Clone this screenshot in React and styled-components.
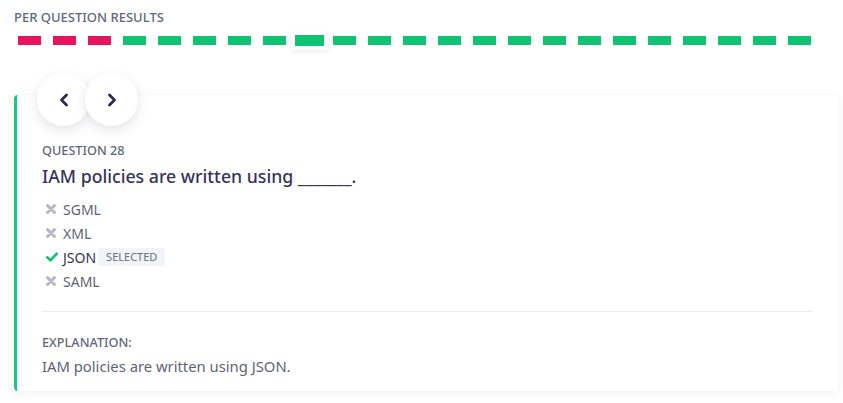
import React from "react";
import styled, { createGlobalStyle } from "styled-components";

const results = [
	false, false, false, true, true, true, true, true, true, true, true, true,
	true, true, true, true, true, true, true, true, true, true, true,
];
const current = 8;

const options = [
	{ label: "SGML", correct: false },
	{ label: "XML", correct: false },
	{ label: "JSON", correct: true, selected: true },
	{ label: "SAML", correct: false },
];

const GlobalStyle = createGlobalStyle`
	body {
		margin: 0;
		background: #ffffff;
		font-family: "Noto Sans", "Open Sans", sans-serif;
	}
`;

const CrossIcon = () => (
	<svg width="10" height="10" viewBox="0 0 10 10">
		<path d="M1.6 1.6 L8.4 8.4 M8.4 1.6 L1.6 8.4" stroke="#b4b9c4" strokeWidth="3" strokeLinecap="round" />
	</svg>
);

const CheckIcon = () => (
	<svg width="12" height="10" viewBox="0 0 12 10">
		<path d="M1.3 5.3 L4.4 8.3 L10.8 1.6" stroke="#12c274" strokeWidth="2.6" fill="none" strokeLinecap="round" strokeLinejoin="round" />
	</svg>
);

const Chevron = ({ dir }) => (
	<svg width="12" height="14" viewBox="0 0 12 14">
		<path
			d={dir === "left" ? "M8.5 2 L3.5 7 L8.5 12" : "M3.5 2 L8.5 7 L3.5 12"}
			stroke="#2b2b52"
			strokeWidth="2.8"
			fill="none"
			strokeLinecap="round"
			strokeLinejoin="round"
		/>
	</svg>
);

const App = () => {
	return (
		<Page>
			<GlobalStyle />
			<Heading>Per question results</Heading>
			<Dashes>
				{results.map((ok, i) => (
					<Dash key={i} $ok={ok} $active={i === current} />
				))}
			</Dashes>
			<CardWrap>
				<NavButtons>
					<NavButton>
						<Chevron dir="left" />
					</NavButton>
					<NavButton $front>
						<Chevron dir="right" />
					</NavButton>
				</NavButtons>
				<Card>
					<Label>Question 28</Label>
					<Question>IAM policies are written using _______.</Question>
					<Options>
						{options.map((o) => (
							<Option key={o.label}>
								<IconBox>{o.correct ? <CheckIcon /> : <CrossIcon />}</IconBox>
								<OptionText $correct={o.correct}>{o.label}</OptionText>
								{o.selected && <Badge>Selected</Badge>}
							</Option>
						))}
					</Options>
					<Divider />
					<Label>Explanation:</Label>
					<Explanation>IAM policies are written using JSON.</Explanation>
				</Card>
			</CardWrap>
		</Page>
	);
};

export default App;

const Page = styled.div`
	padding: 9px 5px 12px 14px;
`;
const Heading = styled.div`
	font-size: 13px;
	line-height: 16px;
	font-weight: 500;
	text-transform: uppercase;
	color: #62677a;
`;
const Dashes = styled.div`
	display: flex;
	gap: 12px;
	padding: 11px 0 0 4px;
	height: 9px;
`;
const Dash = styled.div`
	width: 23px;
	height: 9px;
	flex: none;
	background: ${({ $ok }) => ($ok ? "#0fc372" : "#e9125c")};
	transform: ${({ $active }) => ($active ? "scale(1.26, 1.22)" : "none")};
	box-shadow: ${({ $active }) =>
		$active ? "0 0 0 3px #ffffff, 0 2px 5px 3px rgba(40, 50, 80, 0.09)" : "none"};
`;
const CardWrap = styled.div`
	position: relative;
	margin-top: 50px;
`;
const NavButtons = styled.div`
	position: absolute;
	top: -22px;
	left: 23px;
	display: flex;
	z-index: 2;
`;
const NavButton = styled.div`
	width: 53px;
	height: 53px;
	border-radius: 50%;
	background: #ffffff;
	display: flex;
	align-items: center;
	justify-content: center;
	box-shadow: 0 4px 12px rgba(40, 45, 80, 0.13);
	margin-left: ${({ $front }) => ($front ? "-5px" : "0")};
	position: relative;
	z-index: ${({ $front }) => ($front ? 2 : 1)};
`;
const Card = styled.div`
	background: #ffffff;
	border-left: 3px solid #1dc47c;
	border-radius: 4px;
	box-shadow: 0 2px 10px rgba(40, 45, 80, 0.07);
	padding: 47px 25px 15px 25px;
`;
const Label = styled.div`
	font-size: 12.7px;
	line-height: 16px;
	font-weight: 500;
	text-transform: uppercase;
	color: #62677a;
`;
const Question = styled.div`
	margin-top: 6px;
	font-size: 17.7px;
	line-height: 24px;
	font-weight: 500;
	color: #33345a;
`;
const Options = styled.div`
	margin-top: 9px;
	display: flex;
	flex-direction: column;
	padding-bottom: 18px;
`;
const Option = styled.div`
	display: flex;
	align-items: center;
	height: 24px;
`;
const IconBox = styled.div`
	width: 21px;
	display: flex;
	align-items: center;
	padding-left: 4px;
	box-sizing: border-box;
`;
const OptionText = styled.span`
	font-size: 14px;
	color: ${({ $correct }) => ($correct ? "#33345a" : "#5f6475")};
`;
const Badge = styled.span`
	margin-left: 2px;
	padding: 2px 8px;
	background: #f1f4f8;
	border-radius: 3px;
	font-size: 11px;
	line-height: 14px;
	text-transform: uppercase;
	color: #6a6f80;
`;
const Divider = styled.div`
	height: 1px;
	background: #e9ebef;
	margin: 0 0 22px 0;
`;
const Explanation = styled.div`
	margin-top: 6px;
	font-size: 14.8px;
	line-height: 20px;
	color: #5f6475;
`;
